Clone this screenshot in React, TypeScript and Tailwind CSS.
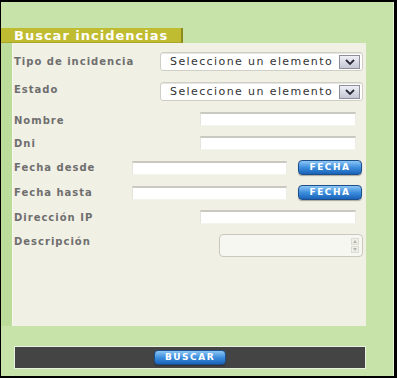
import React from "react";

const labelCls =
  "block text-[10px] font-bold text-[#6e6e6e] tracking-[1px] leading-[10px] [font-family:'DejaVu_Sans',Verdana,sans-serif]";

function Label({ children }: { children: React.ReactNode }) {
  return <span className={labelCls}>{children}</span>;
}

function TextInput({ w }: { w: string }) {
  return (
    <div
      className={`${w} h-[14px] bg-white border-t-2 border-t-[#c9c9c2] border-l border-l-[#e4e4dc] border-r border-r-[#ecece6] border-b border-b-[#f4f4ee]`}
    />
  );
}

function Select() {
  return (
    <div className="w-[203px] h-[19px] bg-white rounded-[3px] border border-[#cfcfc6] flex items-center pl-[9px] pr-[2px] shadow-[inset_0_1px_0_#e6e6e0]">
      <span className="flex-1 text-[11px] text-[#333] tracking-[1.4px] leading-none whitespace-nowrap [font-family:'DejaVu_Sans',Verdana,sans-serif]">
        Seleccione un elemento
      </span>
      <div className="w-[21px] h-[14px] border border-[#8e8e9a] bg-gradient-to-b from-[#eef0f6] to-[#c4c8d4] flex items-center justify-center">
        <svg width="10" height="6" viewBox="0 0 10 6">
          <path d="M1 1 L5 5 L9 1" fill="none" stroke="#2b2b3b" strokeWidth="1.8" />
        </svg>
      </div>
    </div>
  );
}

function BlueButton({ text, w }: { text: string; w: string }) {
  return (
    <div
      className={`${w} h-[15px] rounded-[4px] border border-[#1d4f8a] bg-gradient-to-b from-[#8cc6f4] via-[#3d8fde] to-[#1a62b8] flex items-center justify-center shadow-[0_1px_1px_rgba(0,0,0,0.3)]`}
    >
      <span className="text-[9px] font-bold text-white tracking-[1.5px] leading-none [font-family:'DejaVu_Sans',Verdana,sans-serif]">
        {text}
      </span>
    </div>
  );
}

export default function App() {
  return (
    <div className="w-[397px] h-[378px] bg-black pt-[2px] pl-[1px] pr-[3px] pb-[2px]">
      <div className="w-[393px] h-[374px] bg-[#c7e3aa] border-r border-r-[#e6f2da] flex flex-col">
        <div className="h-[26px]" />
        <div className="w-[182px] h-[15px] bg-[#c0bc31] border-r-2 border-r-[#8d8a1e] border-b border-b-[#a8a52a] flex items-center pl-[13px]">
          <span className="text-[13px] font-bold text-white tracking-[1px] leading-none whitespace-nowrap [font-family:'DejaVu_Sans',Verdana,sans-serif]">
            Buscar incidencias
          </span>
        </div>
        <div className="flex">
          <div className="w-[11px] bg-[#bcdc9c]" />
          <div className="w-[354px] h-[283px] bg-[#f1f0e5] border-l border-l-[#f7f7ee] pt-[9px] pl-[1px] flex flex-col">
            <div className="flex items-center h-[19px]">
              <Label>Tipo de incidencia</Label>
              <div className="ml-auto mr-[3px]">
                <Select />
              </div>
            </div>
            <div className="flex items-center h-[19px] mt-[11px]">
              <div className="-mt-[3px]">
                <Label>Estado</Label>
              </div>
              <div className="ml-auto mr-[3px]">
                <Select />
              </div>
            </div>
            <div className="flex items-center h-[14px] mt-[11px]">
              <div className="mt-[3px]">
                <Label>Nombre</Label>
              </div>
              <div className="ml-auto mr-[10px]">
                <TextInput w="w-[156px]" />
              </div>
            </div>
            <div className="flex items-center h-[14px] mt-[10px]">
              <div className="mt-[2px]">
                <Label>Dni</Label>
              </div>
              <div className="ml-auto mr-[10px]">
                <TextInput w="w-[156px]" />
              </div>
            </div>
            <div className="flex items-center h-[15px] mt-[10px]">
              <div className="mt-[1px]">
                <Label>Fecha desde</Label>
              </div>
              <div className="ml-auto mr-[4px] flex items-center gap-[11px]">
                <TextInput w="w-[155px]" />
                <BlueButton text="FECHA" w="w-[64px]" />
              </div>
            </div>
            <div className="flex items-center h-[15px] mt-[10px]">
              <div className="mt-[1px]">
                <Label>Fecha hasta</Label>
              </div>
              <div className="ml-auto mr-[4px] flex items-center gap-[11px]">
                <TextInput w="w-[155px]" />
                <BlueButton text="FECHA" w="w-[64px]" />
              </div>
            </div>
            <div className="flex items-center h-[14px] mt-[10px]">
              <div className="mt-[1px]">
                <Label>Dirección IP</Label>
              </div>
              <div className="ml-auto mr-[10px]">
                <TextInput w="w-[156px]" />
              </div>
            </div>
            <div className="flex items-start mt-[10px]">
              <div className="mt-[3px]">
                <Label>Descripción</Label>
              </div>
              <div className="ml-auto mr-[3px] w-[144px] h-[23px] rounded-[4px] border border-[#c9c9c0] bg-[#f7f7f2] flex justify-end items-center pr-[3px]">
                <div className="w-[8px] h-[16px] flex flex-col gap-[1px]">
                  <div className="h-[7px] border border-[#dcdcd4] bg-[#efefea] flex items-center justify-center">
                    <svg width="4" height="3" viewBox="0 0 4 3">
                      <path d="M0 3 L2 0 L4 3Z" fill="#b5b5ae" />
                    </svg>
                  </div>
                  <div className="h-[7px] border border-[#dcdcd4] bg-[#efefea] flex items-center justify-center">
                    <svg width="4" height="3" viewBox="0 0 4 3">
                      <path d="M0 0 L2 3 L4 0Z" fill="#b5b5ae" />
                    </svg>
                  </div>
                </div>
              </div>
            </div>
          </div>
        </div>
        <div className="mt-[20px] ml-[13px] w-[352px] h-[23px] bg-[#444444] border border-[#e9f1e0] flex items-center justify-center">
          <BlueButton text="BUSCAR" w="w-[72px]" />
        </div>
      </div>
    </div>
  );
}
